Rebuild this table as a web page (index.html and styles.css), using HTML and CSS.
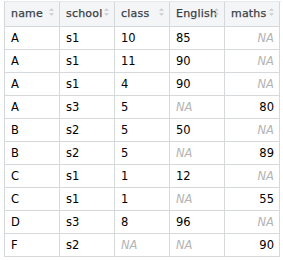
FILE: index.html
```html
<!DOCTYPE html>
<html>
<head>
<meta charset="utf-8">
<link rel="stylesheet" href="styles.css">
</head>
<body>
<div class="grid">
  <div class="th">name<svg class="sort" viewBox="0 0 6 9"><path d="M3 0L6 3H0Z"/><path d="M0 6H6L3 9Z"/></svg></div>
  <div class="th">school<svg class="sort" viewBox="0 0 6 9"><path d="M3 0L6 3H0Z"/><path d="M0 6H6L3 9Z"/></svg></div>
  <div class="th">class<svg class="sort" viewBox="0 0 6 9"><path d="M3 0L6 3H0Z"/><path d="M0 6H6L3 9Z"/></svg></div>
  <div class="th">English<svg class="sort" viewBox="0 0 6 9"><path d="M3 0L6 3H0Z"/><path d="M0 6H6L3 9Z"/></svg></div>
  <div class="th">maths<svg class="sort" viewBox="0 0 6 9"><path d="M3 0L6 3H0Z"/><path d="M0 6H6L3 9Z"/></svg></div>

  <div class="td">A</div><div class="td">s1</div><div class="td">10</div><div class="td">85</div><div class="td r na">NA</div>
  <div class="td">A</div><div class="td">s1</div><div class="td">11</div><div class="td">90</div><div class="td r na">NA</div>
  <div class="td">A</div><div class="td">s1</div><div class="td">4</div><div class="td">90</div><div class="td r na">NA</div>
  <div class="td">A</div><div class="td">s3</div><div class="td">5</div><div class="td na">NA</div><div class="td r">80</div>
  <div class="td">B</div><div class="td">s2</div><div class="td">5</div><div class="td">50</div><div class="td r na">NA</div>
  <div class="td">B</div><div class="td">s2</div><div class="td">5</div><div class="td na">NA</div><div class="td r">89</div>
  <div class="td">C</div><div class="td">s1</div><div class="td">1</div><div class="td">12</div><div class="td r na">NA</div>
  <div class="td">C</div><div class="td">s1</div><div class="td">1</div><div class="td na">NA</div><div class="td r">55</div>
  <div class="td">D</div><div class="td">s3</div><div class="td">8</div><div class="td">96</div><div class="td r na">NA</div>
  <div class="td">F</div><div class="td">s2</div><div class="td na">NA</div><div class="td na">NA</div><div class="td r">90</div>
</div>
</body>
</html>
```
FILE: styles.css
```css
html, body {
  margin: 0;
  padding: 0;
  background: #fff;
}
body {
  padding: 1px 0 0 4px;
  font-family: "DejaVu Sans", Verdana, sans-serif;
  font-size: 11px;
}
.grid {
  display: grid;
  grid-template-columns: repeat(5, 55px);
  grid-template-rows: 25px;
  grid-auto-rows: 23px;
  width: 276px;
  border-left: 1px solid #d6d9dc;
  border-top: 1px solid #e6e8ea;
}
.th, .td {
  box-sizing: border-box;
  border-right: 1px solid #d6d9dc;
  border-bottom: 1px solid #d6d9dc;
  display: flex;
  align-items: center;
  padding: 0 5px 0 6px;
  white-space: nowrap;
  min-width: 0;
}
.th {
  position: relative;
  background: #f4f5f6;
  color: #3a3f46;
  letter-spacing: 0.2px;
  padding-bottom: 1px;
  -webkit-text-stroke: 0.25px #3a3f46;
}
.td {
  color: #000;
  font-size: 11.5px;
}
.td.r {
  justify-content: flex-end;
}
.na {
  color: #b4b4b4;
  font-style: italic;
}
.sort {
  position: absolute;
  right: 5px;
  top: 6px;
  width: 5px;
  height: 8px;
  fill: #c9ccd0;
}
```
